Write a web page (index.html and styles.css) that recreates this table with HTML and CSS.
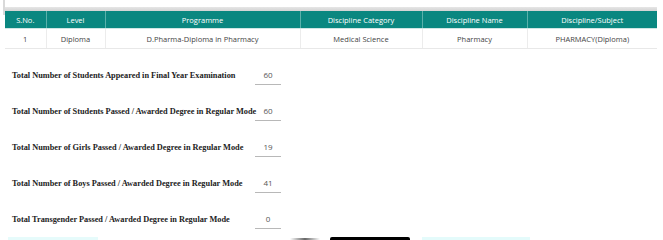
FILE: index.html
```html
<!DOCTYPE html>
<html>
<head>
<meta charset="utf-8">
<link rel="stylesheet" href="styles.css">
</head>
<body>
<div class="frame">
  <div class="topbar"></div>
  <table class="grid">
    <colgroup>
      <col class="c1"><col class="c2"><col class="c3"><col class="c4"><col class="c5"><col class="c6">
    </colgroup>
    <thead>
      <tr><th>S.No.</th><th>Level</th><th>Programme</th><th>Discipline Category</th><th>Discipline Name</th><th>Discipline/Subject</th></tr>
    </thead>
    <tbody>
      <tr><td>1</td><td>Diploma</td><td>D.Pharma-Diploma in Pharmacy</td><td>Medical Science</td><td>Pharmacy</td><td>PHARMACY(Diploma)</td></tr>
    </tbody>
  </table>
</div>
<div class="form">
  <div class="row"><span class="label">Total Number of Students Appeared in Final Year Examination</span><span class="val">60</span></div>
  <div class="row"><span class="label">Total Number of Students Passed / Awarded Degree in Regular Mode</span><span class="val">60</span></div>
  <div class="row"><span class="label">Total Number of Girls Passed / Awarded Degree in Regular Mode</span><span class="val">19</span></div>
  <div class="row"><span class="label">Total Number of Boys Passed / Awarded Degree in Regular Mode</span><span class="val">41</span></div>
  <div class="row"><span class="label">Total Transgender Passed / Awarded Degree in Regular Mode</span><span class="val">0</span></div>
</div>
<div class="bottom">
  <div class="b-cyan1"></div>
  <div class="b-gray"></div>
  <div class="b-black"></div>
  <div class="b-cyan2"></div>
</div>
</body>
</html>
```
FILE: styles.css
```css
html, body { margin: 0; padding: 0; background: #fff; }
body { width: 663px; height: 240px; overflow: hidden; font-family: "Open Sans", "Noto Sans", sans-serif; }
.frame { position: relative; padding: 7px 6px 0 5px; }
.frame::before { content: ""; position: absolute; left: 3px; top: 0; width: 2px; height: 15px; background: #d9d9d9; }
.topbar { height: 4px; background: linear-gradient(#e6e6e6, #d3d3d3); margin-left: -1px; }
.grid { border-collapse: collapse; table-layout: fixed; width: 652px; font-size: 7.5px; }
.c1 { width: 41px; } .c2 { width: 59px; } .c3 { width: 195px; } .c4 { width: 122px; } .c5 { width: 105px; } .c6 { width: 130px; }
.grid th { background: #0a8780; color: #fff; font-weight: 400; height: 17px; padding: 0; border-left: 1px solid #5ab1ab; text-align: center; border-bottom: 1px solid #cfe6e4; }
.grid th:first-child { border-left: none; }
.grid td { height: 19px; padding: 0; text-align: center; color: #444; border-left: 1px solid #ececec; border-bottom: 1px solid #e8e8e8; }
.grid td:first-child { border-left: none; }
.form { padding: 21px 0 0 12px; display: flex; flex-direction: column; }
.row { display: flex; align-items: flex-start; height: 36px; }
.label { width: 243px; font-family: "Liberation Serif", serif; font-weight: 700; font-size: 8.3px; line-height: 10px; margin-top: 1px; color: #222; white-space: nowrap; }
.val { width: 26px; text-align: center; font-size: 8px; color: #555; border-bottom: 1px solid #b8b8b8; padding: 0 0 4px; line-height: 10px; }
.bottom { position: absolute; left: 0; top: 237px; width: 663px; height: 3px; display: flex; }
.b-cyan1 { margin-left: 8px; width: 90px; background: #e6fbfb; }
.b-gray { margin-left: 192px; width: 30px; background: linear-gradient(90deg, #fff, #666, #fff); height: 2px; margin-top: 1px; }
.b-black { margin-left: 10px; width: 80px; background: #000; border-radius: 2px 2px 0 0; }
.b-cyan2 { margin-left: 12px; width: 108px; background: #e4fbfb; }
```
